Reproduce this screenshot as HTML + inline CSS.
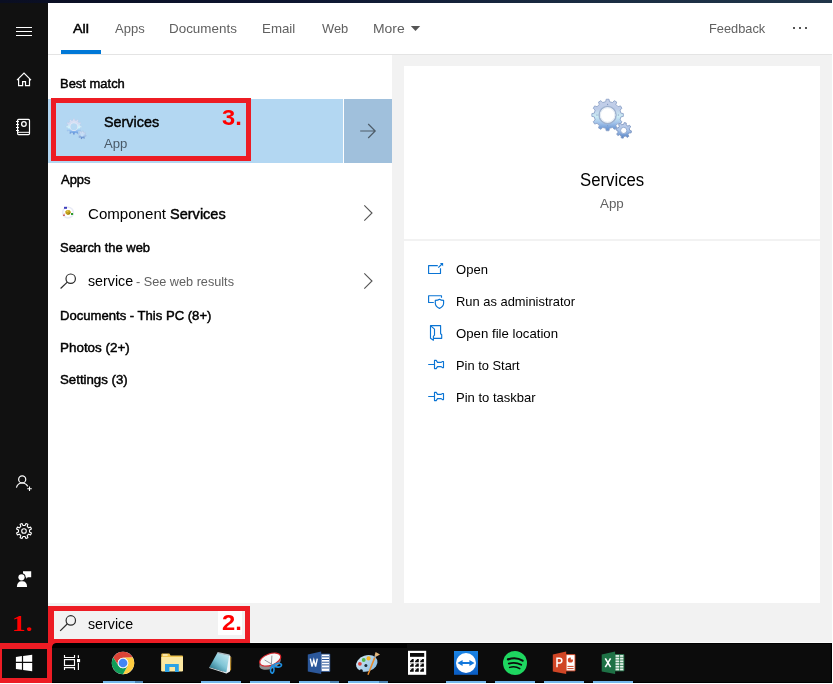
<!DOCTYPE html>
<html>
<head>
<meta charset="utf-8">
<title>Search - Services</title>
<style>
html,body{margin:0;padding:0;}
body{width:833px;height:684px;overflow:hidden;background:#fff;position:relative;font-family:"Liberation Sans",sans-serif;color:#000;}
.a{position:absolute;}
.t{position:absolute;white-space:nowrap;line-height:1;transform-origin:0 0;}
.f13{font-size:13px;}
.f15{font-size:15px;}
.b{font-weight:bold;}
.g{color:#5d5d5d;}
svg{position:absolute;overflow:visible;}
</style>
</head>
<body>
<!-- top strip -->
<div class="a" style="left:0;top:0;width:832px;height:3px;background:linear-gradient(90deg,#0a0e22 0%,#0d1530 35%,#1a2c42 70%,#203549 100%);"></div>
<!-- sidebar -->
<div class="a" style="left:0;top:3px;width:48px;height:640px;background:#111;"></div>
<!-- header separator -->
<div class="a" style="left:48px;top:54px;width:784px;height:1px;background:#e4e4e4;"></div>
<!-- gray background right + bottom -->
<div class="a" style="left:392px;top:55px;width:440px;height:588px;background:#f2f2f2;"></div>
<div class="a" style="left:48px;top:603px;width:784px;height:40px;background:#f2f2f2;"></div>
<!-- right panel -->
<div class="a" style="left:404px;top:66px;width:416px;height:537px;background:#fff;"></div>
<div class="a" style="left:404px;top:239px;width:416px;height:2px;background:#f2f2f2;"></div>
<div class="a" style="left:251px;top:642px;width:581px;height:1px;background:#fbfbfb;"></div>
<!-- taskbar -->
<div class="a" style="left:0;top:643px;width:832px;height:40px;background:#0c0c0c;box-shadow:inset 0 0 0 1px #000;"></div>
<div class="a" style="left:52px;top:643px;width:355px;height:5px;background:#000;"></div>

<!-- TABS -->
<div class="a" style="left:61px;top:50px;width:40px;height:4px;background:#0078d7;"></div>

<!-- LEFT LIST -->
<div class="a" style="left:48px;top:99px;width:295px;height:64px;background:#b3d7f2;"></div>
<div class="a" style="left:344px;top:99px;width:48px;height:64px;background:#a0c0dc;"></div>


<!-- RIGHT PANEL TEXT -->

<!-- SEARCH BOX -->

<!-- ICONS: sidebar + list -->
<svg width="833" height="684" viewBox="0 0 833 684" style="left:0;top:0;" fill="none">
<!-- hamburger -->
<path d="M16 27.5h16M16 31.5h16M16 35.5h16" stroke="#fff" stroke-width="1"/>
<!-- home -->
<path d="M17 80.2L24 73.2L31 80.2M18.6 79V85.6H22.6V81.6H25.5V85.6H29.5V79" stroke="#fff" stroke-width="1.2" stroke-linejoin="miter"/>
<!-- notebook -->
<rect x="17.6" y="119.4" width="11.9" height="15.2" rx="1" stroke="#fff" stroke-width="1.2"/>
<path d="M17.6 132.3H29.5" stroke="#fff" stroke-width="1"/>
<path d="M16 121.5h3M16 124.5h3M16 127.5h3M16 130.5h3" stroke="#fff" stroke-width="1"/>
<circle cx="23.9" cy="124" r="2.3" stroke="#fff" stroke-width="1.3"/>
<!-- person plus -->
<circle cx="22.2" cy="479.4" r="3.55" stroke="#fff" stroke-width="1.2"/>
<path d="M16.4 487.6C17.3 484.6 19.6 483 22.2 483C24.6 483 26.6 484.3 27.7 486.4" stroke="#fff" stroke-width="1.2"/>
<path d="M27.2 488.7h4.6M29.5 486.4v4.6" stroke="#fff" stroke-width="1.1"/>
<!-- settings gear -->
<path d="M29.51 532.01 L31.44 532.97 L30.66 534.87 L28.61 534.18 L27.18 535.61 L27.87 537.66 L25.97 538.44 L25.01 536.51 L22.99 536.51 L22.03 538.44 L20.13 537.66 L20.82 535.61 L19.39 534.18 L17.34 534.87 L16.56 532.97 L18.49 532.01 L18.49 529.99 L16.56 529.03 L17.34 527.13 L19.39 527.82 L20.82 526.39 L20.13 524.34 L22.03 523.56 L22.99 525.49 L25.01 525.49 L25.97 523.56 L27.87 524.34 L27.18 526.39 L28.61 527.82 L30.66 527.13 L31.44 529.03 L29.51 529.99Z" stroke="#fff" stroke-width="1.1" stroke-linejoin="round"/>
<circle cx="24" cy="531" r="2.3" stroke="#fff" stroke-width="1.1"/>
<!-- feedback person -->
<path d="M23 571.2H31.2V577.2H27.8L26.2 578.8V577.2H23Z" fill="#fff"/>
<circle cx="21.5" cy="577.3" r="4.1" fill="#111"/>
<circle cx="21.5" cy="577.3" r="3.1" fill="#fff"/>
<path d="M16.9 586.9C16.9 583.2 18.8 581.3 21.5 581.3H22.5C25.2 581.3 27.1 583.2 27.1 586.9Z" fill="#fff"/>

<!-- result row arrow -->
<path d="M360.2 131H375M368.2 124L375.2 131L368.2 138" stroke="#4e5c69" stroke-width="1.2"/>
<!-- chevrons -->
<path d="M364.3 205.3L372 213L364.3 220.7" stroke="#555" stroke-width="1.1"/>
<path d="M364.3 273.3L372 281L364.3 288.7" stroke="#555" stroke-width="1.1"/>
<!-- magnifiers -->
<circle cx="70.7" cy="278.7" r="4.7" stroke="#2b2b2b" stroke-width="1.2"/>
<path d="M67.3 282.1L60.6 288.5" stroke="#2b2b2b" stroke-width="1.2"/>
<circle cx="70.8" cy="620.4" r="4.7" stroke="#2b2b2b" stroke-width="1.2"/>
<path d="M67.4 623.8L60.2 630.9" stroke="#2b2b2b" stroke-width="1.2"/>
<!-- dots -->
<path d="M793 27h2v2h-2zM799 27h2v2h-2zM805 27h2v2h-2z" fill="#555"/>
<!-- more caret -->
<path d="M410.8 26H420.2L415.5 31Z" fill="#555"/>
</svg>

<div class="a" style="left:218px;top:611px;width:24px;height:24px;background:#fff;"></div>
<!-- ICONS: right panel + list app icons -->
<svg width="833" height="684" viewBox="0 0 833 684" style="left:0;top:0;" fill="none">
<defs>
<linearGradient id="gg" x1="0" y1="0" x2="0" y2="1">
<stop offset="0" stop-color="#c6d0e8"/><stop offset="0.3" stop-color="#bccbe8"/><stop offset="0.55" stop-color="#cbebf4"/><stop offset="0.75" stop-color="#a3c3ea"/><stop offset="1" stop-color="#5d8ccf"/>
</linearGradient>
<linearGradient id="gs" x1="0" y1="0" x2="0" y2="1">
<stop offset="0" stop-color="#c5d0e8"/><stop offset="0.5" stop-color="#a9c4ea"/><stop offset="1" stop-color="#4f7fc4"/>
</linearGradient>
<linearGradient id="gr" x1="0" y1="0" x2="0" y2="1">
<stop offset="0" stop-color="#dde2f4"/><stop offset="0.3" stop-color="#d3dcf3"/><stop offset="0.55" stop-color="#cdf3fb"/><stop offset="0.78" stop-color="#8dbaf0"/><stop offset="1" stop-color="#3f78cc"/>
</linearGradient>
<linearGradient id="gr2" x1="0" y1="0" x2="0" y2="1">
<stop offset="0" stop-color="#dfe6f6"/><stop offset="0.5" stop-color="#b9d2f2"/><stop offset="1" stop-color="#3a6fc0"/>
</linearGradient>
</defs>
<!-- big gears in right panel -->
<path d="M605.71 101.73 L606.20 99.26 L609.00 99.26 L609.49 101.73 L612.60 102.57 L614.25 100.67 L616.69 102.07 L615.87 104.46 L618.14 106.73 L620.53 105.91 L621.93 108.35 L620.03 110.00 L620.87 113.11 L623.34 113.60 L623.34 116.40 L620.87 116.89 L620.03 120.00 L621.93 121.65 L620.53 124.09 L618.14 123.27 L615.87 125.54 L616.69 127.93 L614.25 129.33 L612.60 127.43 L609.49 128.27 L609.00 130.74 L606.20 130.74 L605.71 128.27 L602.60 127.43 L600.95 129.33 L598.51 127.93 L599.33 125.54 L597.06 123.27 L594.67 124.09 L593.27 121.65 L595.17 120.00 L594.33 116.89 L591.86 116.40 L591.86 113.60 L594.33 113.11 L595.17 110.00 L593.27 108.35 L594.67 105.91 L597.06 106.73 L599.33 104.46 L598.51 102.07 L600.95 100.67 L602.60 102.57Z" fill="url(#gg)" stroke="#8fa4c8" stroke-width="0.9" stroke-linejoin="round"/>
<circle cx="607.6" cy="115" r="8.5" fill="#fff" stroke="#9fb2cf" stroke-width="1.5"/>
<circle cx="607.6" cy="115" r="7.2" fill="#fff" stroke="#dfe8f2" stroke-width="0.8"/>
<path d="M607.6 104.3v.1M607.6 125.7v.1M596.9 115h.1M618.3 115h.1" stroke="#7d93ba" stroke-width="1.1" stroke-linecap="round"/>
<path d="M629.70 130.33 L631.48 130.92 L631.07 132.95 L629.20 132.80 L627.99 134.59 L628.84 136.27 L627.11 137.42 L625.89 135.99 L623.77 136.40 L623.18 138.18 L621.15 137.77 L621.30 135.90 L619.51 134.69 L617.83 135.54 L616.68 133.81 L618.11 132.59 L617.70 130.47 L615.92 129.88 L616.33 127.85 L618.20 128.00 L619.41 126.21 L618.56 124.53 L620.29 123.38 L621.51 124.81 L623.63 124.40 L624.22 122.62 L626.25 123.03 L626.10 124.90 L627.89 126.11 L629.57 125.26 L630.72 126.99 L629.29 128.21Z" fill="url(#gs)" stroke="#7f97c2" stroke-width="0.9" stroke-linejoin="round"/>
<circle cx="623.7" cy="130.4" r="3.1" fill="#fff" stroke="#8fa6cc" stroke-width="0.9"/>
<!-- small gears in best-match row -->
<path d="M73.00 120.36 L73.20 118.83 L74.60 118.83 L74.80 120.36 L76.29 120.76 L77.23 119.53 L78.44 120.24 L77.85 121.66 L78.94 122.75 L80.36 122.16 L81.07 123.37 L79.84 124.31 L80.24 125.80 L81.77 126.00 L81.77 127.40 L80.24 127.60 L79.84 129.09 L81.07 130.03 L80.36 131.24 L78.94 130.65 L77.85 131.74 L78.44 133.16 L77.23 133.87 L76.29 132.64 L74.80 133.04 L74.60 134.57 L73.20 134.57 L73.00 133.04 L71.51 132.64 L70.57 133.87 L69.36 133.16 L69.95 131.74 L68.86 130.65 L67.44 131.24 L66.73 130.03 L67.96 129.09 L67.56 127.60 L66.03 127.40 L66.03 126.00 L67.56 125.80 L67.96 124.31 L66.73 123.37 L67.44 122.16 L68.86 122.75 L69.95 121.66 L69.36 120.24 L70.57 119.53 L71.51 120.76Z" fill="url(#gr)" stroke="#b4c6e4" stroke-width="0.3" stroke-linejoin="round"/>
<circle cx="73.9" cy="126.7" r="4.3" fill="#e4e9f6"/>
<circle cx="73.9" cy="126.7" r="3.5" fill="#b7d9f3"/>
<path d="M85.20 134.96 L86.29 135.27 L86.07 136.34 L84.95 136.20 L84.35 137.10 L84.90 138.09 L83.99 138.69 L83.29 137.79 L82.24 138.00 L81.93 139.09 L80.86 138.87 L81.00 137.75 L80.10 137.15 L79.11 137.70 L78.51 136.79 L79.41 136.09 L79.20 135.04 L78.11 134.73 L78.33 133.66 L79.45 133.80 L80.05 132.90 L79.50 131.91 L80.41 131.31 L81.11 132.21 L82.16 132.00 L82.47 130.91 L83.54 131.13 L83.40 132.25 L84.30 132.85 L85.29 132.30 L85.89 133.21 L84.99 133.91Z" fill="url(#gr2)" stroke="#9db1d4" stroke-width="0.3" stroke-linejoin="round"/>
<circle cx="82.2" cy="135" r="1.5" fill="#c5dff5"/>
<!-- component services icon -->
<circle cx="68" cy="212.6" r="5.4" stroke="#e9ebf6" stroke-width="1.6"/>
<path d="M65.2 211.4L67 209.9L69.8 210.2L71 212.2L69.6 214.6L67.4 215.1L65.6 213.6Z" fill="#c2a01c"/>
<path d="M66.2 211.2L67.4 210.6L68.8 211L67.6 211.8Z" fill="#f2df6a"/>
<path d="M67.8 214.6L69.4 214.2L70.4 212.6L69 213Z" fill="#8f7410"/>
<rect x="64" y="206.8" width="3" height="2" fill="#3f3fbd"/>
<rect x="71" y="213" width="2.1" height="2" fill="#2f9e2f"/>
<path d="M64.2 213.2L64.9 215.9H62.9Z" fill="#c84a4a"/>
<!-- Open -->
<g stroke="#0a74d4" stroke-width="1.15" stroke-linejoin="round" stroke-linecap="butt">
<path d="M437.8 265.6H428.6V273.5H440.5V268.2"/>
<path d="M438.3 267.7L442 264"/>
<path d="M439.9 263.1H443.1V266.3Z" fill="#0a74d4" stroke="none"/>
<!-- Run as admin -->
<path d="M433.8 302.5H428.6V295.7H441.5V297.8"/>
<path d="M435.3 300.4C437 300.4 438.5 300 439.5 299.3C440.5 300 442 300.4 443.6 300.4V303.3C443.6 305.7 441.8 307.4 439.5 308.4C437.2 307.4 435.3 305.7 435.3 303.3Z"/>
<!-- Open file location -->
<path d="M430.5 325.6H440.6V333.8L441.7 334.8V338.3H433.6"/>
<path d="M430.5 325.6L434.5 329.1V335.2L433.4 336.3V340.2L430.5 338.2Z"/>
<!-- Pin to Start -->
<path d="M428.2 364.5H434.5M434.5 360.4H436.2L437.5 362.4H441.2L442.4 361.5H443.5V367.6H442.4L441.2 366.6H437.5L436.2 368.6H434.5Z"/>
<!-- Pin to taskbar -->
<path d="M428.2 396.5H434.5M434.5 392.4H436.2L437.5 394.4H441.2L442.4 393.5H443.5V399.6H442.4L441.2 398.6H437.5L436.2 400.6H434.5Z"/>
</g>
</svg>

<!-- ICONS: taskbar -->
<svg width="833" height="684" viewBox="0 0 833 684" style="left:0;top:0;" fill="none">
<defs>
<linearGradient id="np" x1="0.9" y1="0" x2="0.1" y2="1"><stop offset="0" stop-color="#c4e8f0"/><stop offset="0.5" stop-color="#7fc5d6"/><stop offset="1" stop-color="#16657d"/></linearGradient>
<linearGradient id="pal" x1="0" y1="0" x2="1" y2="1"><stop offset="0" stop-color="#d3e9f7"/><stop offset="1" stop-color="#86bbe0"/></linearGradient>
<linearGradient id="tv" x1="0" y1="0" x2="0" y2="1"><stop offset="0" stop-color="#1a84e6"/><stop offset="1" stop-color="#0a5cc2"/></linearGradient>
</defs>
<!-- running indicators -->
<g fill="#76b9ed">
<rect x="103" y="681" width="32" height="2"/><rect x="201" y="681" width="40" height="2"/><rect x="250" y="681" width="40" height="2"/>
<rect x="299" y="681" width="31" height="2"/><rect x="348" y="681" width="31" height="2"/><rect x="446" y="681" width="40" height="2"/>
<rect x="495" y="681" width="40" height="2"/><rect x="544" y="681" width="40" height="2"/><rect x="593" y="681" width="40" height="2"/>
</g>
<g fill="#4f86b5"><rect x="135" y="681" width="8" height="2"/><rect x="330" y="681" width="9" height="2"/><rect x="379" y="681" width="9" height="2"/></g>
<!-- windows logo -->
<path d="M15.9 657L21.9 656.1V661.7H15.9ZM23.1 655.9L32.2 654.7V661.7H23.1ZM15.9 663H21.9V669.7L15.9 668.9ZM23.1 663H32.2V671.2L23.1 669.9Z" fill="#fff"/>
<!-- task view -->
<g stroke="#fff" stroke-width="1.15">
<rect x="64.5" y="659.6" width="10" height="5.9"/>
<path d="M64.5 655V657.5H74.5V655M64.5 670V667.6H74.5V670M78.4 655.2V658M78.4 663.1V670"/>
</g>
<rect x="77" y="659" width="3.1" height="3.2" fill="#fff"/>
<path d="M52 643H56C53.5 643.4 52.4 644.6 52 647Z" fill="#ed1c24"/>
<!-- chrome -->
<circle cx="123.0" cy="663.0" r="11.2" fill="#fff"/>
<path d="M113.30 657.40A11.2 11.2 0 0 1 132.70 657.40L123.00 657.70A5.3 5.3 0 0 0 118.41 665.65Z" fill="#db4437"/><path d="M132.70 657.40A11.2 11.2 0 0 1 123.00 674.20L127.59 665.65A5.3 5.3 0 0 0 123.00 657.70Z" fill="#ffcd40"/><path d="M123.00 674.20A11.2 11.2 0 0 1 113.30 657.40L118.41 665.65A5.3 5.3 0 0 0 127.59 665.65Z" fill="#0f9d58"/>
<circle cx="123.0" cy="663.0" r="5.3" fill="#f1f1f1"/>
<circle cx="123.0" cy="663.0" r="4.3" fill="#4285f4"/>
<!-- file explorer -->
<path d="M161.3 654.6Q161.3 653.6 162.3 653.6H169.4L170.6 655.6H182Q183 655.6 183 656.6V671H161.3Z" fill="#f0c550"/>
<rect x="163" y="654.4" width="4.6" height="1.2" fill="#fff8e0"/>
<path d="M161.3 657H183V670.6Q183 671.6 182 671.6H162.3Q161.3 671.6 161.3 670.6Z" fill="#fce8a2"/>
<path d="M165 663.9H178.8V672H175V667H169.4V672H165Z" fill="#2ca3e6"/>
<!-- notepad -->
<path d="M229 655L230.5 656L230 671.4L226.4 673.4L223 671.6Z" fill="#eef3f6"/>
<path d="M230.4 656.2L231.3 657.4L231.1 669.6L230 671.3Z" fill="#c9962e"/>
<path d="M217.4 652.8L229.2 655.2L226.4 672.6L209.3 667.3Z" fill="url(#np)"/>
<path d="M209.3 667.3L226.4 672.6L226.3 673.4L209.2 668Z" fill="#dfe7ea"/>
<path d="M217.7 651.9L229.7 654.4L229.3 655.8L217.2 653.3Z" fill="#aeb9c0"/>
<!-- snipping tool -->
<g transform="rotate(-20 270.2 662.6)"><ellipse cx="269.9" cy="662.9" rx="11.3" ry="6" fill="#8e8e8e"/></g>
<g transform="rotate(-20 270.2 659.6)"><ellipse cx="270.2" cy="659.6" rx="11" ry="5.7" fill="#f7f7f7" stroke="#d8262c" stroke-width="1.1"/></g>
<path d="M264.6 660L273.6 665.2M271.9 655.6L271.4 664.6" stroke="#8b9096" stroke-width="0.9"/>
<path d="M273.5 665.5C275.5 662.8 279.5 662.6 281.4 664.4C282.4 666.6 277.5 668.6 273.5 665.5ZM272.2 665.6C274.8 667.6 274.4 671.6 272.6 673.2C270.2 673.6 269.6 668.6 272.2 665.6Z" stroke="#1e8fe0" stroke-width="1.6"/>
<!-- word -->
<path d="M321.1 654.1H329.8V671.4H321.1Z" fill="#fff" stroke="#2b579a" stroke-width="0.8"/>
<path d="M322 656.8H329M322 659.5H329M322 662.2H329M322 664.9H329M322 668H329" stroke="#2b579a" stroke-width="1"/>
<path d="M307.8 654.6L321.2 651.4V674.1L307.8 671.4Z" fill="#2b579a"/>
<path d="M310.3 658.6L312 666.6L313.8 660L315.6 666.6L317.3 658.6" stroke="#fff" stroke-width="1.4" stroke-linejoin="miter"/>
<!-- paint -->
<g transform="rotate(-18 366.8 663.4)"><ellipse cx="366.8" cy="663.4" rx="11" ry="8" fill="url(#pal)"/></g>
<circle cx="361.2" cy="671" r="1.7" fill="#0c0c0c"/>
<circle cx="359.9" cy="663.8" r="1.9" fill="#e0433c"/><circle cx="363.7" cy="660" r="1.9" fill="#58b947"/><circle cx="368.6" cy="658.4" r="2.1" fill="#f5b324"/>
<circle cx="365.9" cy="665.5" r="1.5" fill="#1c2a36"/>
<path d="M367.3 674.6L374 657.2L375.6 657.8L368.6 674.9Z" fill="#e98a2a"/>
<path d="M374 657.2L374.8 655.4L376.4 656L375.6 657.8Z" fill="#9aa3ab"/>
<path d="M374.6 655.6L375.6 652L380 654.4L376.4 656.4Z" fill="#e2b67c"/>
<!-- calculator -->
<rect x="408" y="650.8" width="18.2" height="24" fill="#fff"/>
<rect x="410" y="653" width="14.2" height="3.8" fill="#0c0c0c"/>
<g fill="#0c0c0c">
<path d="M410 659h3.7v3.2h-3.7zM415.1 659h3.7v3.2h-3.7zM420.2 659h3.7v3.2h-3.7zM410 663.6h3.7v3.2h-3.7zM415.1 663.6h3.7v3.2h-3.7zM420.2 663.6h3.7v3.2h-3.7zM410 668.3h3.7v3.4h-3.7zM415.1 668.3h3.7v3.4h-3.7zM420.2 668.3h3.7v3.4h-3.7z"/>
</g>
<g fill="#fff">
<path d="M410 659h2.2l-2.2 2.2zM415.1 659h2.2l-2.2 2.2zM420.2 659h2.2l-2.2 2.2zM410 663.6h2.2l-2.2 2.2zM415.1 663.6h2.2l-2.2 2.2zM420.2 663.6h2.2l-2.2 2.2zM410 668.3h2.2l-2.2 2.2zM415.1 668.3h2.2l-2.2 2.2zM420.2 668.3h2.2l-2.2 2.2z"/>
</g>
<!-- teamviewer -->
<rect x="454" y="651" width="24" height="23.8" fill="url(#tv)"/>
<circle cx="466" cy="663" r="10" fill="#fff"/>
<path d="M457.4 663L462.6 660V662H469.4V660L474.6 663L469.4 666V664H462.6V666Z" fill="#1378dc"/>
<!-- spotify -->
<circle cx="515" cy="663" r="12" fill="#1ed760"/>
<g stroke="#0c0c0c" stroke-linecap="round">
<path d="M508 659.4C512.6 657.8 518.6 658.2 522.6 660.6" stroke-width="2.2"/>
<path d="M508.8 663.6C512.6 662.4 517.6 662.8 521.2 664.8" stroke-width="1.8"/>
<path d="M509.6 667.4C512.8 666.5 516.8 666.8 519.8 668.6" stroke-width="1.5"/>
</g>
<!-- powerpoint -->
<path d="M566 654.6H575V670.9H566Z" fill="#fff" stroke="#d04525" stroke-width="0.9"/>
<circle cx="570.4" cy="660" r="2.6" fill="#d04525"/>
<path d="M570.8 656.6V659.6H573.8A3 3 0 0 0 570.8 656.6Z" fill="#fff"/>
<path d="M567.4 666.4H573.6M567.4 668.6H573.6" stroke="#d04525" stroke-width="1"/>
<path d="M552.8 654.6L566.2 651.4V674.1L552.8 671.4Z" fill="#d04525"/>
<path d="M557 667.2V658.2H559.6C562.6 658.2 562.6 663 559.6 663H557" stroke="#fff" stroke-width="1.5"/>
<!-- excel -->
<path d="M615 654.6H623.9V670.9H615Z" fill="#e8f3ec" stroke="#1e7145" stroke-width="0.9"/>
<path d="M619.6 654.6V670.9M615 657.3H623.9M615 660H623.9M615 662.7H623.9M615 665.4H623.9M615 668.1H623.9" stroke="#1e7145" stroke-width="0.8"/>
<path d="M601.7 654.6L615.1 651.4V674.1L601.7 671.4Z" fill="#1e7145"/>
<path d="M605.3 658.3L610.6 667.2M610.6 658.3L605.3 667.2" stroke="#fff" stroke-width="1.6"/>
</svg>

<div style="position:absolute;left:0;top:0;width:833px;height:684px;will-change:opacity">
<div class="t" style="left:73.07px;top:22px;font-size:13px;color:#000;transform:scaleX(1.1030);-webkit-text-stroke:0.45px #000;">All</div>
<div class="t" style="left:114.80px;top:22px;font-size:13px;color:#616161;transform:scaleX(1.0010);">Apps</div>
<div class="t" style="left:169.45px;top:22px;font-size:13px;color:#616161;transform:scaleX(1.0317);">Documents</div>
<div class="t" style="left:261.97px;top:22px;font-size:13px;color:#616161;transform:scaleX(1.0238);">Email</div>
<div class="t" style="left:321.60px;top:22px;font-size:13px;color:#616161;transform:scaleX(0.9926);">Web</div>
<div class="t" style="left:372.96px;top:22px;font-size:13px;color:#616161;transform:scaleX(1.0716);">More</div>
<div class="t" style="left:709.31px;top:22px;font-size:13px;color:#616161;transform:scaleX(0.9843);">Feedback</div>
<div class="t" style="left:59.79px;top:77px;font-size:13px;color:#000;transform:scaleX(0.9969);-webkit-text-stroke:0.45px #000;">Best match</div>
<div class="t" style="left:104.24px;top:114px;font-size:15px;color:#000;transform:scaleX(0.9584);-webkit-text-stroke:0.45px #000;">Services</div>
<div class="t" style="left:104.40px;top:137px;font-size:13px;color:#4a5a68;transform:scaleX(1.0103);">App</div>
<div class="t" style="left:60.56px;top:173px;font-size:13px;color:#000;transform:scaleX(0.9950);-webkit-text-stroke:0.45px #000;">Apps</div>
<div class="t" style="left:87.50px;top:206px;font-size:15px;color:#000;transform:scaleX(1.0053);">Component</div>
<div class="t" style="left:169.51px;top:206px;font-size:15px;color:#000;transform:scaleX(0.9688);-webkit-text-stroke:0.45px #000;">Services</div>
<div class="t" style="left:60.30px;top:241px;font-size:13px;color:#000;transform:scaleX(0.9972);-webkit-text-stroke:0.45px #000;">Search the web</div>
<div class="t" style="left:88.44px;top:273px;font-size:15px;color:#000;transform:scaleX(0.9490);">service</div>
<div class="t" style="left:136.05px;top:275px;font-size:13px;color:#616161;transform:scaleX(0.9756);">- See web results</div>
<div class="t" style="left:59.76px;top:309px;font-size:13px;color:#000;transform:scaleX(1.0067);-webkit-text-stroke:0.45px #000;">Documents - This PC (8+)</div>
<div class="t" style="left:59.69px;top:341px;font-size:13px;color:#000;transform:scaleX(1.0323);-webkit-text-stroke:0.45px #000;">Photos (2+)</div>
<div class="t" style="left:60.26px;top:373px;font-size:13px;color:#000;transform:scaleX(1.0190);-webkit-text-stroke:0.45px #000;">Settings (3)</div>
<div class="t" style="left:579.95px;top:171px;font-size:18px;color:#000;transform:scaleX(0.9306);">Services</div>
<div class="t" style="left:599.69px;top:197px;font-size:13px;color:#616161;transform:scaleX(1.0272);">App</div>
<div class="t" style="left:456.18px;top:263px;font-size:13px;color:#000;transform:scaleX(1.0028);">Open</div>
<div class="t" style="left:455.55px;top:295px;font-size:13px;color:#000;transform:scaleX(0.9925);">Run as administrator</div>
<div class="t" style="left:456.16px;top:327px;font-size:13px;color:#000;transform:scaleX(1.0158);">Open file location</div>
<div class="t" style="left:455.55px;top:359px;font-size:13px;color:#000;transform:scaleX(0.9900);">Pin to Start</div>
<div class="t" style="left:455.52px;top:391px;font-size:13px;color:#000;transform:scaleX(1.0027);">Pin to taskbar</div>
<div class="t" style="left:88.44px;top:616px;font-size:15px;color:#000;transform:scaleX(0.9490);">service</div>
<div class="t" style="left:222.41px;top:107px;font-size:22.5px;color:#ff0000;transform:scaleX(1.0529);font-weight:bold;">3.</div>
<div class="t" style="left:221.97px;top:612px;font-size:22.5px;color:#ff0000;transform:scaleX(1.0549);font-weight:bold;">2.</div>
<div class="t" style="left:11.88px;top:611px;font-size:24px;color:#ff0000;transform:scaleX(1.1391);font-weight:bold;font-family:'Liberation Serif',serif;">1.</div>
</div>

<!-- RED ANNOTATIONS -->
<div class="a" style="left:51px;top:98px;width:190px;height:53px;border:5px solid #ed1c24;"></div>
<div class="a" style="left:48px;top:606px;width:191px;height:28px;border:solid #ed1c24;border-width:5px 5px 4px 6px;"></div>
<div class="a" style="left:-3px;top:643px;width:45px;height:29px;border:solid #ed1c24;border-width:6px 5px 5px 5px;"></div>
<div class="a" style="left:48px;top:606px;width:4px;height:77px;background:#ed1c24;"></div>

</body>
</html>
